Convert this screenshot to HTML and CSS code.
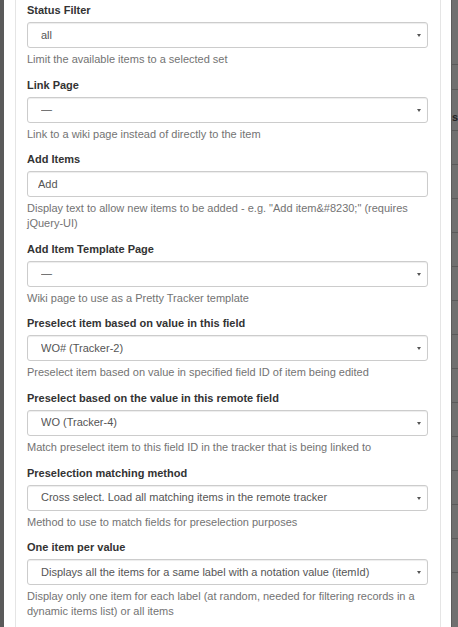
FILE: index.html
```html
<!DOCTYPE html>
<html lang="en">
<head>
    <meta charset="UTF-8">
    <meta name="viewport" content="width=device-width, initial-scale=1.0">
    <title>Tracker Field Options</title>
    <link rel="stylesheet" href="styles.css">
</head>
<body>
    <div class="screen">
        <div class="edge-left"></div>

        <div class="modal">
            <div class="panel">
                <div class="form-group">
                    <label for="status">Status Filter</label>
                    <div class="select-wrap">
                        <select id="status" class="form-control"><option>all</option></select>
                    </div>
                    <p class="help">Limit the available items to a selected set</p>
                </div>

                <div class="form-group">
                    <label for="link">Link Page</label>
                    <div class="select-wrap">
                        <select id="link" class="form-control"><option>&mdash;</option></select>
                    </div>
                    <p class="help">Link to a wiki page instead of directly to the item</p>
                </div>

                <div class="form-group">
                    <label for="additems">Add Items</label>
                    <input id="additems" class="form-control" type="text" value="Add">
                    <p class="help">Display text to allow new items to be added - e.g. "Add item&amp;#8230;" (requires jQuery-UI)</p>
                </div>

                <div class="form-group">
                    <label for="template">Add Item Template Page</label>
                    <div class="select-wrap">
                        <select id="template" class="form-control"><option>&mdash;</option></select>
                    </div>
                    <p class="help">Wiki page to use as a Pretty Tracker template</p>
                </div>

                <div class="form-group">
                    <label for="preselect">Preselect item based on value in this field</label>
                    <div class="select-wrap">
                        <select id="preselect" class="form-control"><option>WO# (Tracker-2)</option></select>
                    </div>
                    <p class="help">Preselect item based on value in specified field ID of item being edited</p>
                </div>

                <div class="form-group">
                    <label for="remote">Preselect based on the value in this remote field</label>
                    <div class="select-wrap">
                        <select id="remote" class="form-control"><option>WO (Tracker-4)</option></select>
                    </div>
                    <p class="help">Match preselect item to this field ID in the tracker that is being linked to</p>
                </div>

                <div class="form-group">
                    <label for="method">Preselection matching method</label>
                    <div class="select-wrap">
                        <select id="method" class="form-control"><option>Cross select. Load all matching items in the remote tracker</option></select>
                    </div>
                    <p class="help">Method to use to match fields for preselection purposes</p>
                </div>

                <div class="form-group">
                    <label for="onevalue">One item per value</label>
                    <div class="select-wrap">
                        <select id="onevalue" class="form-control"><option>Displays all the items for a same label with a notation value (itemId)</option></select>
                    </div>
                    <p class="help">Display only one item for each label (at random, needed for filtering records in a dynamic items list) or all items</p>
                </div>
            </div>
        </div>

        <!-- page behind the backdrop, mostly hidden -->
        <div class="edge-right">
            <div class="bg-row bg-head"></div>
            <div class="bg-row bg-short"></div>
            <div class="bg-row bg-tall"><span class="bg-text">s</span></div>
            <div class="bg-row"></div>
            <div class="bg-row"></div>
            <div class="bg-row"></div>
            <div class="bg-row"></div>
            <div class="bg-row"></div>
            <div class="bg-row"></div>
            <div class="bg-row"></div>
            <div class="bg-row"></div>
            <div class="bg-row"></div>
            <div class="bg-row"></div>
            <div class="bg-row"></div>
            <div class="bg-row"></div>
            <div class="bg-row"></div>
        </div>
    </div>
</body>
</html>
```

FILE: styles.css
```css
body {
    margin: 0;
    font-family: "Liberation Sans", Arial, sans-serif;
    font-size: 11px;
    line-height: 15px;
    color: #333;
    background: #666;
}
.screen {
    display: flex;
    height: 627px;
    overflow: hidden;
}
.edge-left {
    width: 4px;
    flex: none;
    background: #5a5a5a;
}
.modal {
    width: 447px;
    flex: none;
    box-sizing: border-box;
    padding: 0 10px 0 11px;
    background: #fff;
}
.panel {
    height: 100%;
    padding: 3px 12px 0 11px;
    border-left: 1px solid #e5e5e5;
    border-right: 1px solid #e5e5e5;
}
.form-group {
    margin-bottom: 10.6px;
}
.form-group label {
    display: block;
    font-weight: bold;
    margin-bottom: 4px;
}
.form-control {
    display: block;
    width: 100%;
    height: 26px;
    box-sizing: border-box;
    margin: 0;
    padding: 0 10px;
    font: inherit;
    color: #555;
    background: #fff;
    border: 1px solid #ccc;
    border-radius: 3px;
    box-shadow: inset 0 1px 1px rgba(0, 0, 0, 0.075);
}
select.form-control {
    appearance: none;
    -webkit-appearance: none;
    padding-left: 13px;
    padding-right: 20px;
}
.select-wrap {
    position: relative;
}
.select-wrap::after {
    content: "";
    position: absolute;
    right: 7px;
    top: 12px;
    border-left: 2.5px solid transparent;
    border-right: 2.5px solid transparent;
    border-top: 3px solid #555;
}
.help {
    margin: 4px 0 0;
    color: #737373;
}
.edge-right {
    flex: 1;
    background: #707070;
    border-left: 1px solid #5c5c5c;
}
.bg-row {
    height: 33px;
    border-bottom: 1px solid #5a5a5a;
}
.bg-head {
    height: 64px;
}
.bg-short {
    height: 24px;
}
.bg-tall {
    height: 40px;
}
.bg-text {
    display: block;
    padding-top: 20px;
    font-weight: bold;
    color: #222;
}
```
